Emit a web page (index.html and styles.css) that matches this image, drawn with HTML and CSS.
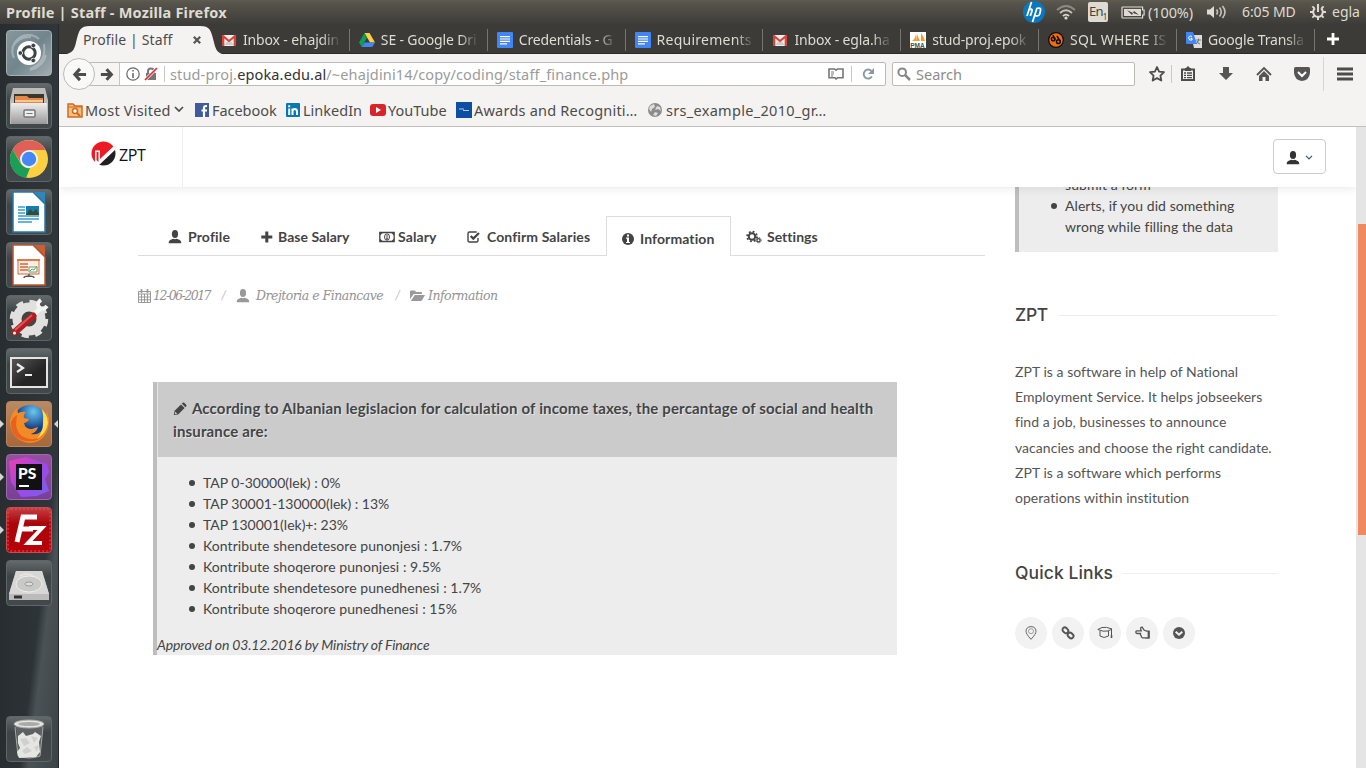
FILE: index.html
```html
<!DOCTYPE html>
<html lang="en">
<head>
<meta charset="utf-8">
<title>Profile | Staff</title>
<link rel="stylesheet" href="styles.css">
</head>
<body>
<svg class="defs" aria-hidden="true">
  <defs>
    <linearGradient id="metal" x2="0" y2="1"><stop stop-color="#eee"/><stop offset="1" stop-color="#999"/></linearGradient>
    <linearGradient id="dark" x2="1" y2="1"><stop stop-color="#555"/><stop offset=".6" stop-color="#252525"/></linearGradient>
    <linearGradient id="violet" x2="1" y2="1"><stop stop-color="#ef3fae"/><stop offset=".5" stop-color="#a346e5"/><stop offset="1" stop-color="#7562ed"/></linearGradient>
    <linearGradient id="fire" x2="1" y2="1"><stop stop-color="#ff9a2e"/><stop offset=".6" stop-color="#e65a1c"/><stop offset="1" stop-color="#ffc629"/></linearGradient>
    <radialGradient id="globe" cx=".6" cy=".2"><stop stop-color="#6ac7f2"/><stop offset="1" stop-color="#123f86"/></radialGradient>
    <symbol id="user" viewBox="0 0 14 14"><ellipse cx="7" cy="4" rx="3.1" ry="4"/><path d="M.8 13.3c-.4-3 2-3.500 4.600-4.500q1.600.8 3.200 0c2.600 1 5 1.500 4.600 4.500z"/></symbol>
    <symbol id="gmail" viewBox="0 0 16 16"><path fill="#eee" d="M1 3h14v11H1z"/><path fill="#ccc" d="m3 13 5-5 5 5z"/><path fill="#d9453b" d="M1 14V3h1.500L8 7.700 13.500 3H15v11h-2.300V6.500L8 10.300 3.300 6.500V14z"/></symbol>
    <symbol id="docs" viewBox="0 0 16 16"><rect width="16" height="16" rx="1" fill="#4285f4"/><path stroke="#fff" stroke-width="1.200" d="M3 4.600h10M3 7h10M3 9.400h10M3 11.800h7"/></symbol>
  </defs>
</svg>

<div class="panel">
  <b class="panel-title">Profile | Staff - Mozilla Firefox</b>
  <div class="tray">
    <svg class="t-hp" viewBox="0 0 22 22"><circle cx="11" cy="11" r="11" fill="#0a78bd"/><path fill="none" stroke="#fff" stroke-width="1.800" d="M8.500 1 4 15M6 9q4-2 3 1l-1.700 5M14 7l-4.500 14M13.500 7.500q5-1.300 4 2l-1 4q-.8 2-4.500 1.200"/></svg>
    <svg class="t-wifi" viewBox="0 0 20 16"><g fill="none" stroke="#8c8a83" stroke-width="1.800"><path d="M1 6q9-8 18 0"/><path stroke="#c8c4ba" d="M4 9q6-5.500 12 0"/><path stroke="#dfdbd2" d="M7 12q3-2.800 6 0"/></g><circle cx="10" cy="14" r="1.600" fill="#dfdbd2"/></svg>
    <span class="lang">En<sub>1</sub></span>
    <svg class="t-bat" viewBox="0 0 24 13"><path fill="none" stroke="#dfdbd2" stroke-width="1.200" d="M1 1.600q0-.6.600-.6h20v3h1.500v5h-1.500v3H1.600Q1 12 1 11.500z"/><path fill="#dfdbd2" d="M3 3h17v7H3z"/><path d="m6 4 6 3 1-2 5 4-6-2-1 2z" fill="#45433e"/></svg>
    <span class="pct">(100%)</span>
    <svg class="t-vol" viewBox="0 0 20 14"><path fill="#dfdbd2" d="M0 4.500h3L7 1v12L3 9.500H0z"/><path fill="none" stroke="#c8c4ba" stroke-width="1.600" d="M9.500 4.500q2 2.500 0 5M12.500 2.500q3.500 4.500 0 9M15.500 1q5 6 0 12"/></svg>
    <span class="clock">6:05 MD</span>
    <svg class="t-gear" viewBox="0 0 16 16"><path fill="none" stroke="#dfdbd2" stroke-width="2" d="M5 4.300a4.800 4.800 0 1 0 6 0"/><path stroke="#dfdbd2" stroke-width="2" d="M0 8h3m10 0h3M8 13v3M2.400 2.400l2 2m9.200-2-2 2M2.400 13.600l2-2m9.200 2-2-2M8 0v8"/></svg>
    <span class="who">egla</span>
  </div>
</div>

<div class="desktop">
<div class="launcher">
  <div class="tile t-dash"><svg viewBox="0 0 46 46"><g fill="none" stroke="#c5ced0" opacity=".55"><path stroke-width="2" d="M8 28A16 16 0 0 1 33 9M38 14q3 18-14 25M6 18Q12 6 25 7M40 25q-3 12-16 15"/></g><circle cx="23" cy="23" r="12" fill="#fff"/><circle cx="23" cy="23" r="6.200" fill="none" stroke="#3b4449" stroke-width="3"/><path stroke="#fff" stroke-width="1.300" d="M17 23h-4m13-5.200 2-3.800m-2 14.200 2 3.800"/><g fill="#3b4449" stroke="#fff" stroke-width=".7"><circle cx="14.300" cy="23" r="2.300"/><circle cx="27.300" cy="15.500" r="2.300"/><circle cx="27.300" cy="30.500" r="2.300"/></g></svg></div>
  <div class="tile"><svg viewBox="0 0 46 46"><path fill="#bcbcb8" d="M7 5h32l3 12v24H4V17z"/><path fill="#3a3630" d="M8 11h30v9H8z"/><path fill="#e58745" d="M9 13h12l2 2h14v6H9z"/><path fill="#f4c79b" d="M9 17h28v2H9z"/><rect x="5" y="20" width="36" height="21" rx="1" fill="url(#metal)"/><rect x="18" y="27" width="11" height="7" rx="1" fill="#eee" stroke="#777" stroke-width="1.500"/><path stroke="#777" d="M20.500 30.500h6"/></svg></div>
  <div class="tile"><svg viewBox="0 0 46 46"><circle cx="23" cy="23" r="19" fill="#fdd042"/><path fill="#df6058" d="M6.500 13.500A19 19 0 0 1 39.500 14H23l-8 13z"/><path fill="#1b9e58" d="M6.500 13.500 15 28q4 5 9 4l-4 10A19 19 0 0 1 6.500 13.500z"/><circle cx="23" cy="23" r="9" fill="#f2f2f2"/><circle cx="23" cy="23" r="7.200" fill="#4587f3"/></svg></div>
  <div class="tile"><svg viewBox="0 0 46 46"><path fill="#fff" stroke="#2379ad" stroke-width="1.500" d="M7 3h20l12 12v28H7z"/><path fill="#2e86ba" d="M28 3h11v11z"/><path stroke="#3b9acc" stroke-width="1.500" d="M12 18h7m-7 3h7m-7 3h7m-7 3h21m-21 3h21m-21 3h14"/><path fill="#187cb4" d="M20 17h13v9H20z"/><path fill="#384b2b" d="m20 26 4-6 3 3 3-3 3 5v1z"/></svg></div>
  <div class="tile"><svg viewBox="0 0 46 46"><path fill="#fff" stroke="#bd552b" stroke-width="1.500" d="M7 3h20l12 12v28H7z"/><path fill="#c95f34" d="M28 3h11v11z"/><rect x="12" y="18" width="21" height="14" fill="#faece4" stroke="#d36a3d"/><path stroke="#d36a3d" stroke-width="1.500" d="M11 18h23M14 22h8m-8 3h8m-8 3h8"/><path fill="#fff" stroke="#60a664" d="M23 25h8v5h-8zm1 4 2-2 2 1 3-4"/><path stroke="#555" fill="none" stroke-width="1.500" d="M23 32v3m-5 1q0-2 5-2t5 2"/></svg></div>
  <div class="tile"><svg viewBox="0 0 46 46"><circle cx="23" cy="24" r="12" fill="none" stroke="#e0e0de" stroke-width="9"/><circle cx="23" cy="24" r="17" fill="none" stroke="#e0e0de" stroke-width="4.500" stroke-dasharray="7 6.350"/><path stroke="#f4f4f2" stroke-width="5" d="m26 21 9-8"/><path fill="none" stroke="#f4f4f2" stroke-width="4" d="M35 5q-5 3-2 7 4 4 8-1"/><path stroke="#b11e22" stroke-width="7" stroke-linecap="round" d="m9 37 18-16"/><path stroke="#df555a" stroke-width="2" d="m9 35 17-15"/><circle cx="8.500" cy="38" r="1.500" fill="#fff"/></svg></div>
  <div class="tile"><svg viewBox="0 0 46 46"><rect x="4" y="9" width="38" height="31" fill="#e3e3df"/><rect x="6" y="11" width="34" height="27" fill="url(#dark)"/><path fill="none" stroke="#eee" stroke-width="2.200" d="m11 16 6 4-6 4m8 3h7"/></svg></div>
  <div class="tile t-ff"><i class="run"></i><i class="run active"></i><svg viewBox="0 0 46 46"><circle cx="24" cy="21" r="17" fill="url(#globe)"/><path fill="#f28a25" d="M4 19q2-8 7-12l1 5q5-2 8-1-3 3-2 6l5 1q-1 3-5 4 1 6 8 6l6-2q-1 5-7 7 10 2 14-9 3-9 1-15 5 8 2 18-4 14-18 15Q4 40 4 19z"/><path fill="#e8611e" d="M5 22q0 15 14 18 13 2 19-7-5 6-14 5Q11 36 10 23l1-9q-5 3-6 8z"/><path fill="#ffdb4d" d="M36 8q8 9 5 18-3 8-10 12 6-8 6-15 1-8-1-15z"/></svg></div>
  <div class="tile t-ps"><i class="run"></i><svg viewBox="0 0 46 46"><path fill="url(#violet)" d="m3 7 17-4 21 7 2 8-4 7 4 12-12 5-16 1-10-15z"/><rect x="10" y="10" width="26" height="26" fill="#111"/><path stroke="#fff" stroke-width="2" d="M13 32h10"/><text x="12" y="25" fill="#fff" font-family="Lato" font-weight="900" font-size="15.500">PS</text></svg></div>
  <div class="tile t-fz"><i class="run"></i><svg viewBox="0 0 46 46"><rect x="2" y="2" width="42" height="42" rx="3" fill="none" stroke="#df5660" stroke-dasharray="2 2"/><path fill="none" stroke="#fff" stroke-width="5" d="M31 10H17l-6 25m4-13h12"/><path fill="none" stroke="#fff" stroke-width="4" d="M23 21h13L22 36h14"/></svg></div>
  <div class="tile"><svg viewBox="0 0 46 46"><path fill="#bbb" d="M10 11h26l7 23v6H3v-6z"/><path fill="#d7d7d5" d="M10 11h26l7 23H3z"/><ellipse cx="23" cy="24" rx="13" ry="8" fill="#c9c9c7" stroke="#eee"/><ellipse cx="23" cy="24" rx="4" ry="2" fill="#ddd" stroke="#999"/><path stroke="#333" stroke-width="3" d="M8 37h8"/><path fill="none" stroke="#eee" d="M14 16q8-5 14 1"/></svg></div>
  <div class="tile trash"><svg viewBox="0 0 46 46"><path fill="#777c7d" opacity=".5" d="m10 10 2 31h22l3-31z"/><ellipse cx="23" cy="8" rx="15" ry="4" fill="#e5e5e0" stroke="#aaa"/><ellipse cx="23" cy="8" rx="11" ry="2" fill="#aaa"/><path fill="none" stroke="#aaa" d="m9 11 3 29q11 4 22 0l3-29"/><path fill="#e5e5e2" d="m12 20 5-4 3 4 7-2 2-2 6 4-2 6 1 10-4 5-17 1-2-6 3-4-2-5z"/><path fill="#d0d1ce" d="m14 23 6-1 4 5-6 3zm11-3 7 2-4 5zm-9 15 5-4 5 4-7 3zm12-4 5-2-2 7z"/></svg></div>
</div>

<div class="browser">
  <div class="tabstrip">
    <div class="tab-active">
      <svg class="tab-shape" viewBox="0 0 166 30" preserveAspectRatio="none"><path fill="#f4f3f1" d="M0 30V29.500C11 29.500 13 26 15 18 18 6 19 2 29 2H139C149 2 150 6 153 18 155 26 157 29.500 166 29.500V30z"/></svg>
      <span class="tab-name">Profile | Staff</span>
      <svg class="tab-close" viewBox="0 0 8 8"><path stroke="#555" stroke-width="2.200" d="m.8.8 6.400 6.400m0-6.400L.8 7.200"/></svg>
    </div>
    <div class="tab"><svg viewBox="0 0 16 16"><use href="#gmail"/></svg><span>Inbox - ehajdin</span></div>
    <div class="tab"><svg viewBox="0 0 16 16"><path fill="#ffcf45" d="M5.500 1h5L16 10.500h-5z"/><path fill="#0f9d58" d="M5.500 1 8 5.500 2.700 15 0 10.500z"/><path fill="#4285f4" d="M5.500 10.500H16L13.300 15H2.700z"/></svg><span>SE - Google Dri</span></div>
    <div class="tab"><svg viewBox="0 0 16 16"><use href="#docs"/></svg><span>Credentials - G</span></div>
    <div class="tab"><svg viewBox="0 0 16 16"><use href="#docs"/></svg><span class="wide">Requirements</span></div>
    <div class="tab"><svg viewBox="0 0 16 16"><use href="#gmail"/></svg><span>Inbox - egla.ha</span></div>
    <div class="tab"><svg viewBox="0 0 16 16"><path fill="#fff" d="M0 0h16v16H0z"/><path fill="#f59b26" d="M2 9q4-3 4-8l1 8zm5 0V2l3 7zm4 0V1q3 4 4 8z"/><text x=".2" y="15.500" font-family="Liberation Sans" font-weight="bold" font-size="6.500" fill="#335566">PMA</text></svg><span>stud-proj.epok</span></div>
    <div class="tab"><svg viewBox="0 0 16 16"><circle cx="8" cy="8" r="8" fill="#111"/><circle cx="8" cy="8" r="6.700" fill="#f36c13"/><g fill="none" stroke="#111" stroke-width="1.500"><circle cx="5.200" cy="7" r="1.800"/><circle cx="10.400" cy="9.700" r="1.900"/><path d="m5 3 2 5m2-4 3 5"/></g></svg><span class="wide">SQL WHERE IS</span></div>
    <div class="tab"><svg viewBox="0 0 16 16"><path fill="#ddd" d="M5 3h11v13H8z"/><path fill="#4385f5" d="M0 0h7l4 12H1q-1 0-1-1z"/><path fill="none" stroke="#fff" d="M6 4.500q-3-1.500-3.300 1.500Q3 9 6 8V6.300H4.500"/><path fill="none" stroke="#6c7b84" d="M10 8h5m-2.500-1.500V8q0 3-2.500 4m1-3q1 3 3 3"/></svg><span>Google Transla</span></div>
    <svg class="newtab" viewBox="0 0 12 12"><path stroke="#fff" stroke-width="2.800" d="M6 0v12M0 6h12"/></svg>
  </div>

  <div class="navbar">
    <div class="back"><svg viewBox="0 0 16 16"><path fill="none" stroke="#4c4c4c" stroke-width="3.200" d="M8.500 2 3 8l5.500 6M3 8h12"/></svg></div>
    <div class="urlbar">
      <div class="fwd"><svg viewBox="0 0 16 16"><path fill="none" stroke="#4c4c4c" stroke-width="3.500" d="M7.500 2 13 8l-5.500 6M13 8H1"/></svg></div>
      <svg class="u-info" viewBox="0 0 14 14"><circle cx="7" cy="7" r="6.200" fill="none" stroke="#666" stroke-width="1.200"/><path stroke="#666" stroke-width="1.500" d="M7 6v5M7 3v1.600"/></svg>
      <svg class="u-lock" viewBox="0 0 14 14"><path fill="none" stroke="#777" stroke-width="2" d="M4 7V4q0-2.500 3-2.500T10 4v3"/><path fill="#777" d="M2 6h10v7H2z"/><path stroke="#fff" stroke-width="3" d="M1 13 13 1"/><path stroke="#dc2e32" stroke-width="1.700" d="M1 13 13 1"/></svg>
      <i class="u-sep"></i>
      <span class="url">stud-proj.<em>epoka.edu.al</em>/~ehajdini14/copy/coding/staff_finance.php</span>
      <svg class="u-reader" viewBox="0 0 16 12"><path fill="none" stroke="#777" stroke-width="1.600" d="M7 9.800H1V1h5.500L8 2.200 9.500 1H15v8.800H9.500L8 11z"/><path stroke="#777" d="M3 4h3M3 6h3M3 8h2"/></svg>
      <i class="u-sep u-sep2"></i>
      <svg class="u-reload" viewBox="0 0 12 12"><path fill="none" stroke="#8899a5" stroke-width="1.900" d="M9.500 3A4.500 4.500 0 1 0 10 8.500"/><path fill="#8899a5" d="M12 0v6H6z"/></svg>
    </div>
    <div class="search"><svg viewBox="0 0 14 14"><circle cx="5.200" cy="5.200" r="3.800" fill="none" stroke="#888" stroke-width="2"/><path stroke="#888" stroke-width="2.500" d="m8 8 5 5"/></svg><span>Search</span></div>
    <div class="tools">
      <svg class="star" viewBox="0 0 16 16"><path fill="none" stroke="#4c4c4c" stroke-width="1.800" stroke-linejoin="round" d="m8 1 2.100 4.600 4.900.6-3.600 3.400.9 4.900L8 12.100l-4.300 2.400.9-4.900L1 6.200l4.900-.6z"/></svg>
      <i class="g-sep"></i>
      <svg class="clip" viewBox="0 0 16 16"><path fill="none" stroke="#4c4c4c" stroke-width="2" d="M2 3.500h12V14H2z"/><path fill="#4c4c4c" d="M5 2h1l2-2 2 2h1v3H5z"/><path stroke="#4c4c4c" stroke-width="1.300" d="M4 7h2m1 0h5M4 9.300h2m1 0h5M4 11.600h2m1 0h5"/></svg>
      <svg class="down" viewBox="0 0 16 16"><path fill="#555" d="M5 1h6v6h4l-7 7-7-7h4z"/></svg>
      <svg class="home" viewBox="0 0 16 16"><path fill="none" stroke="#555" stroke-width="1.900" d="m1 9 7-7 7 7"/><path fill="#555" d="m3 10 5-5 5 5v5H9.500v-4h-3v4H3z"/></svg>
      <svg class="pocket" viewBox="0 0 16 14"><path fill="#555" d="M1.500 0h13Q16 0 16 1.500V6q-1 7.500-8 8Q1 13.500 0 6V1.500Q0 0 1.500 0z"/><path fill="none" stroke="#fff" stroke-width="2" d="m4 5 4 4 4-4"/></svg>
      <i class="g-sep tall"></i>
      <svg class="menu" viewBox="0 0 16 14"><path stroke="#4c4c4c" stroke-width="2.800" d="M0 2h16M0 7h16M0 12h16"/></svg>
    </div>
  </div>

  <div class="bookmarks">
    <div class="bm bm1"><svg viewBox="0 0 16 16"><path fill="#f5c07d" stroke="#cf6b20" stroke-width="1.500" d="M1 2h5l2 2h7v11H1z"/><path stroke="#cf6b20" d="M1 5h14"/><circle cx="8" cy="9" r="2.500" fill="#fff" stroke="#cf6b20" stroke-width="1.500"/><path stroke="#cf6b20" stroke-width="2" d="m10 11 3 3"/></svg><span>Most Visited</span><svg class="chev" viewBox="0 0 10 7"><path fill="none" stroke="#4c4c4c" stroke-width="1.700" d="m1 1 4 4 4-4"/></svg></div>
    <div class="bm bm2"><svg viewBox="0 0 16 16"><path fill="#3f5b9b" d="M1 1h14v14H1z"/><path fill="none" stroke="#fff" stroke-width="2.200" d="M13 4h-1q-2 0-2 2v9M7.500 8.500H13"/></svg><span>Facebook</span></div>
    <div class="bm bm3"><svg viewBox="0 0 16 16"><rect x="1" y="1" width="14" height="14" rx="1" fill="#0878b5"/><path fill="none" stroke="#fff" stroke-width="2" d="M4.200 6.500V13M4.200 3.300v2M7.500 6.500V13m0-3.500q0-2.500 2.300-2.500Q12 7 12 9.500V13"/></svg><span>LinkedIn</span></div>
    <div class="bm bm4"><svg viewBox="0 0 16 16"><rect y="2" width="16" height="12" rx="3" fill="#d9252a"/><path fill="#fff" d="m6 5 5 3-5 3z"/></svg><span>YouTube</span></div>
    <div class="bm bm5"><svg viewBox="0 0 16 16"><path fill="#0b4ea2" d="M0 0h16v16H0z"/><path stroke="#b7cbe5" d="M3 7h5m-1 1.500h6"/></svg><span>Awards and Recogniti…</span></div>
    <div class="bm bm6"><svg viewBox="0 0 16 16"><circle cx="8" cy="8" r="7" fill="#8b8b8b"/><path fill="#ddd" d="m3 4 4-2 1 3-3 2-1 3-2-3zm7 0 3 1 1 4-3-2-3 1zM8 10l3 1-2 3-3-1z"/></svg><span>srs_example_2010_gr…</span></div>
  </div>

  <div class="page">
    <div class="page-col">
      <header class="site-head">
        <div class="logo"><svg viewBox="0 0 26 26"><defs><clipPath id="disc"><circle cx="12.500" cy="12.500" r="12"/></clipPath></defs><g clip-path="url(#disc)"><path fill="#ed1c24" d="M0 0h26v2L9 18V9.500H4V26H0z"/><path fill="#ed1c24" d="M5.500 11h2v10l-2-2z"/><path fill="#231f20" d="M26 7v19H6z"/></g></svg><span>ZPT</span></div>
        <div class="account"><svg class="a-user" viewBox="0 0 14 14"><use href="#user"/></svg><svg class="a-chev" viewBox="0 0 8 5"><path fill="none" stroke="#355b78" stroke-width="1.200" d="m1 .8 3 3 3-3"/></svg></div>
      </header>
      <div class="columns">
        <main>
          <nav class="menu-tabs">
            <a class="m1"><svg viewBox="0 0 14 14"><use href="#user"/></svg>Profile</a>
            <a class="m2"><svg viewBox="0 0 14 14"><path d="M5.300 1.500h3v4h4v3h-4v4h-3v-4h-4v-3h4z"/></svg>Base Salary</a>
            <a class="m3"><svg viewBox="0 0 16 14"><path fill="none" stroke="#444" stroke-width="1.300" d="M.8 2.500h14.400v9H.8z"/><path d="M1 3h2.500L1 5.500zm14 0h-2.500L15 5.500zM1 11h2.500L1 8.500zm14 0h-2.500L15 8.500z"/><ellipse cx="8" cy="7" rx="2.500" ry="3.200" fill="none" stroke="#444"/><path stroke="#444" d="M8 5v4M7 9h2"/></svg>Salary</a>
            <a class="m4"><svg viewBox="0 0 14 14"><path fill="none" stroke="#444" stroke-width="1.400" d="M11 8v2.500q0 1.500-1.500 1.500h-7Q1 12 1 10.500v-7Q1 2 2.500 2h7.200"/><path fill="none" stroke="#444" stroke-width="2.200" d="m3.700 6 2.600 2.600L12 3"/></svg>Confirm Salaries</a>
            <a class="m5"><svg viewBox="0 0 14 14"><circle cx="7" cy="7" r="6"/><path fill="#fff" d="M6 2.500h2v2H6zM5 5.500h3V10h1v1H5v-1h1V6.700H5z"/></svg>Information</a>
            <a class="m6"><svg viewBox="0 0 16 14"><circle cx="6" cy="6.500" r="3.200" fill="none" stroke="#444" stroke-width="2"/><circle cx="6" cy="6.500" r="4.900" fill="none" stroke="#444" stroke-width="1.800" stroke-dasharray="1.900 1.950"/><circle cx="12.500" cy="10.200" r="1.600" fill="none" stroke="#444" stroke-width="1.300"/><circle cx="12.500" cy="10.200" r="2.700" fill="none" stroke="#444" stroke-width="1" stroke-dasharray="1.100 1.020"/></svg>Settings</a>
          </nav>
          <div class="meta">
            <svg class="i-cal" viewBox="0 0 13 14"><path fill="none" stroke="#999" d="M.5 2.500h12v11H.5zM.5 5h12M.5 8h12M.5 10.800h12M3.500 5v8.500M6.500 5v8.500M9.500 5v8.500"/><path stroke="#999" stroke-width="1.700" d="M3.500 0v4m6-4v4"/></svg>
            <span class="date">12-06-2017</span><span class="slash">/</span>
            <svg class="i-usr" viewBox="0 0 14 14"><use href="#user"/></svg>
            <span class="dept">Drejtoria e Financave</span><span class="slash">/</span>
            <svg class="i-fold" viewBox="0 0 15 12"><path d="M0 1.500Q0 .5 1 .5h4l1 1.500h5q1 0 1 1v1H4.500q-1 0-1.500 1L0 9.200z"/><path d="M4.800 5H15l-2.800 5q-.6 1-1.700 1H.8z"/></svg>
            <span class="topic">Information</span>
          </div>
          <section class="notice">
            <h3><svg viewBox="0 0 14 14"><path d="m.8 13 .8-4.200L8 2.400l3.600 3.600-6.500 6.500z"/><path d="m8.800 1.600.9-.9q.8-.6 1.500.1l2 2q.7.700.1 1.500l-.9.900z"/><path fill="#cbcbcb" d="m2.200 9.700 2.100 2.100-1.700.4-.8-.8z"/></svg>According to Albanian legislacion for calculation of income taxes, the percantage of social and health<br>insurance are:</h3>
            <ul>
              <li>TAP 0-30000(lek) : 0%</li>
              <li>TAP 30001-130000(lek) : 13%</li>
              <li>TAP 130001(lek)+: 23%</li>
              <li class="k">Kontribute shendetesore punonjesi : 1.7%</li>
              <li class="k">Kontribute shoqerore punonjesi : 9.5%</li>
              <li class="k">Kontribute shendetesore punedhenesi : 1.7%</li>
              <li class="k">Kontribute shoqerore punedhenesi : 15%</li>
            </ul>
            <p>Approved on 03.12.2016 by Ministry of Finance</p>
          </section>
        </main>
        <aside>
          <ul class="hints">
            <li class="plain">submit a form</li>
            <li>Alerts, if you did something<br>wrong while filling the data</li>
          </ul>
          <h4 class="h-zpt"><span>ZPT</span></h4>
          <p class="about">ZPT is a software in help of National<br>Employment Service. It helps jobseekers<br>find a job, businesses to announce<br>vacancies and choose the right candidate.<br>ZPT is a software which performs<br>operations within institution</p>
          <h4 class="h-quick"><span>Quick Links</span></h4>
          <div class="quick">
            <i><svg viewBox="0 0 14 14"><path fill="none" stroke="#666" d="M7 13.300Q2 8 2 5.200 2.300.7 7 .6q4.700.1 5 4.600Q12 8 7 13.300z"/><circle cx="7" cy="5.200" r="2.500" fill="none" stroke="#888" stroke-width=".8"/></svg></i>
            <i><svg viewBox="0 0 14 14"><g fill="none" stroke="#555" stroke-width="1.900"><rect x="1.300" y="2" width="6.200" height="4.600" rx="2.200" transform="rotate(45 4.400 4.300)"/><rect x="6.500" y="7.200" width="6.200" height="4.600" rx="2.200" transform="rotate(45 9.600 9.500)"/></g></svg></i>
            <i><svg class="cap" viewBox="0 0 16 14"><path fill="none" stroke="#555" d="M.8 3.500 5 1.500q4-1 10 1.500L11 5Q6 6 .8 3.500zM3 5v5q4 3 8.500 0V5M14.500 3v6"/><path fill="#555" d="M13.700 9h1.600v3h-1.600z"/></svg></i>
            <i><svg class="hand" viewBox="0 0 15 14"><path fill="none" stroke="#555" stroke-width="1.300" d="M11 11.800H7.800Q6 11.500 6.300 10 5 9 5.500 7.500H2Q.8 7.300.8 6 .8 5 2 4.800h4.300L5.600 3Q5.600 1 7.200 1.200L9 4l2.500 1.200H14V12h-3z"/><path fill="#555" d="M12.600 5h2v7h-2z"/></svg></i>
            <i><svg viewBox="0 0 14 14"><circle cx="7" cy="7" r="6" fill="#555"/><path fill="none" stroke="#f2f2f2" stroke-width="2" d="m3.700 5.700 3.300 3 3.300-3"/></svg></i>
          </div>
        </aside>
      </div>
    </div>
    <div class="scroll"><div class="thumb"></div></div>
  </div>
</div>
</div>
</body>
</html>
```
FILE: styles.css
```css
* { box-sizing: border-box; }
body { margin: 0; width: 1366px; height: 768px; overflow: hidden; display: flex; flex-direction: column; font-family: "Noto Sans", "Open Sans", sans-serif; background: #fff; }
svg { flex: none; display: block; }
.defs { position: absolute; width: 0; height: 0; }
i { font-style: normal; }

/* top panel */
.panel { height: 24px; flex: none; display: flex; align-items: center; justify-content: space-between; background: linear-gradient(#5f5c51, #57554c 10%, #3e3c38); color: #dfdbd2; font-size: 14px; line-height: 24px; white-space: nowrap; }
.panel-title { padding-left: 6px; font-size: 14.500px; letter-spacing: 0.2px; }
.tray { width: 343px; display: flex; align-items: center; }
.t-hp { width: 22px; height: 22px; }
.t-wifi { width: 20px; height: 16px; margin-left: 11px; }
.lang { width: 20px; height: 20px; margin-left: 12px; border-radius: 2px; background: #dfdbd2; color: #45433e; font-size: 13px; line-height: 19px; padding-left: 1px; letter-spacing: -0.8px; }
.lang sub { font-size: 8px; line-height: 0; }
.t-bat { width: 24px; height: 13px; margin-left: 13px; }
.pct { width: 47px; margin-left: 3px; font-size: 14.500px; letter-spacing: -0.1px; }
.t-vol { width: 20px; height: 14px; margin-left: 12px; }
.clock { width: 56px; margin-left: 15px; letter-spacing: -0.1px; }
.t-gear { width: 16px; height: 16px; margin-left: 12px; }
.who { margin-left: 6px; letter-spacing: 0; }

.desktop { flex: 1; display: flex; min-height: 0; }

/* launcher */
.launcher { width: 59px; flex: none; padding: 6px 0 6px 6px; display: flex; flex-direction: column; gap: 7px; border-right: 1px solid #24282a; background: linear-gradient(97deg, transparent 66%, #4b5256 74%, #3c4347 100%) 0 300px / 100% 444px no-repeat, linear-gradient(90deg, #282d30, #30373a); }
.tile { position: relative; width: 46px; height: 46px; flex: none; border-radius: 4px; border: 1px solid #5f6568; background: linear-gradient(#64696b, #3f4447 35%, #43484a); }
.tile svg { width: 46px; height: 46px; margin: -1px; }
.t-dash { background: linear-gradient(135deg, #87979c, #71858d 50%, #a2aeb2); border-color: #a6b0b3; }
.t-ff { background: linear-gradient(#b88a65, #a7673b); border-color: #b9855e; }
.t-ps { background: linear-gradient(#93509f, #793f98); border-color: #a467ad; }
.t-fz { background: linear-gradient(#c63d42, #a9060c 35%, #b80007); border-color: #c74d4f; }
.trash { margin-top: auto; }
.run { position: absolute; left: -7px; top: 18px; border: 4px solid transparent; border-left-color: #d5d5d5; border-right: 0; }
.run.active { left: auto; right: -7px; border-right: 4px solid #d5d5d5; border-left: 0; }

/* browser */
.browser { flex: 1; min-width: 0; display: flex; flex-direction: column; background: #f4f3f1; color: #4c4c4c; }
.tabstrip { height: 30px; flex: none; display: flex; align-items: center; background: #3c3b37; border-bottom: 1px solid #2b2a27; font-size: 14px; white-space: nowrap; }
.tab-active { position: relative; width: 153px; height: 30px; flex: none; display: flex; align-items: center; padding: 2px 0 0 24px; }
.tab-shape { position: absolute; left: 2px; top: 0; width: 166px; height: 31px; }
.tab-name { position: relative; width: 110px; color: #4c4c4c; letter-spacing: 0.13px; }
.tab-close { position: relative; width: 8px; height: 8px; }
.tab { width: 137.850px; height: 22px; margin-top: 2px; padding-left: 9px; flex: none; display: flex; align-items: center; gap: 6px; border-right: 1px solid #77756f; color: #dfdbd2; position: relative; }
.tab svg { width: 16px; height: 16px; }
.tab span { width: 98px; letter-spacing: -0.15px; -webkit-mask-image: linear-gradient(90deg, #000 80%, transparent); mask-image: linear-gradient(90deg, #000 80%, transparent); }
.tab span.wide { letter-spacing: 0.25px; }
.newtab { width: 12px; height: 12px; margin-left: 12px; }

.navbar { height: 40px; flex: none; display: flex; align-items: center; padding-left: 4px; }
.back { position: relative; z-index: 1; width: 32px; height: 32px; flex: none; border: 1px solid #bdbab6; border-radius: 50%; background: #f9f9f8; display: flex; align-items: center; justify-content: center; }
.back svg, .fwd svg { width: 15px; height: 15px; }
.urlbar { width: 801px; height: 24px; margin-left: -10px; flex: none; display: flex; align-items: center; background: #fff; border: 1px solid #bebbb7; border-radius: 2px; }
.fwd { width: 34px; height: 22px; flex: none; padding-left: 14px; background: #f6f5f4; border-right: 1px solid #c9c6c2; display: flex; align-items: center; }
.fwd svg { width: 14px; }
.u-info { width: 14px; height: 14px; margin-left: 6px; }
.u-lock { width: 14px; height: 14px; margin-left: 4px; }
.u-sep { width: 1px; height: 16px; flex: none; margin-left: 6px; background: #c9c6c2; }
.url { width: 658px; margin-left: 5px; font-size: 14.500px; letter-spacing: 0.14px; color: #9b9b9b; white-space: nowrap; }
.url em { font-style: normal; color: #333; }
.u-reader { width: 16px; height: 12px; }
.u-sep2 { margin-left: 7px; }
.u-reload { width: 12px; height: 12px; margin-left: 10px; }
.search { width: 243px; height: 24px; flex: none; margin-left: 6px; padding-left: 4px; display: flex; align-items: center; gap: 5px; border: 1px solid #bebbb7; border-radius: 2px; background: #fff; color: #8c8c8c; font-size: 14.500px; }
.search svg { width: 14px; height: 14px; }
.tools { display: flex; align-items: center; padding-left: 14px; }
.tools svg { width: 16px; height: 16px; }
.g-sep { width: 1px; height: 18px; margin: 0 8px 0 6px; background: #cbc9c5; }
.g-sep.tall { height: 34px; margin: 0 13px; background: #d8d6d3; }
.down, .home, .pocket { margin-left: 22px; }
.tools .pocket, .tools .menu { height: 14px; }

.bookmarks { height: 33px; flex: none; padding: 0 0 1px 8px; border-bottom: 1px solid #c3bfbb; display: flex; align-items: center; font-size: 14.500px; white-space: nowrap; }
.bm { display: flex; align-items: center; gap: 2px; flex: none; }
.bm svg { width: 16px; height: 16px; }
.bm svg.chev { width: 10px; height: 7px; }
.bm1 { width: 127px; letter-spacing: 0.2px; } .bm2 { width: 91px; } .bm3 { width: 85px; } .bm4 { width: 86px; } .bm5 { width: 191px; letter-spacing: 0.22px; }
.bm1 span { width: 87px; }
.bm2 { letter-spacing: -0.05px; }
.bm6 { gap: 3px; letter-spacing: 0.3px; }

/* page */
.page { flex: 1; min-height: 0; display: flex; background: #fff; font-family: Lato, sans-serif; color: #444; }
.page-col { width: 1297px; flex: none; display: flex; flex-direction: column; }
.scroll { width: 10px; flex: none; background: #e5e5e5; padding: 97px 0 0 2px; }
.thumb { height: 311px; background: #f0895f; }
.site-head { position: relative; z-index: 2; height: 60px; flex: none; display: flex; justify-content: space-between; background: #fff; box-shadow: 0 1px 9px rgba(0,0,0,.1); clip-path: inset(0 0 -14px 0); }
.logo { width: 124px; height: 60px; border-right: 1px solid #eee; padding: 14px 0 0 32px; display: flex; gap: 2px; font: 16px/28px "Open Sans", sans-serif; color: #111; letter-spacing: -0.4px; }
.logo svg { width: 26px; height: 26px; }
.account { width: 53px; height: 35px; margin: 12px 30px 0 0; border: 1px solid #ccc; border-radius: 4px; display: flex; align-items: center; gap: 5px; padding: 2px 0 0 12px; fill: #333; }
.a-user { width: 14px; height: 14px; }
.a-chev { width: 8px; height: 5px; }
.columns { display: flex; padding-left: 79px; }
main { width: 847px; margin-right: 30px; padding-top: 29px; }
.menu-tabs { height: 40px; border-bottom: 1px solid #ddd; padding-left: 30px; display: flex; font-weight: 700; font-size: 14px; line-height: 42px; white-space: nowrap; }
.menu-tabs a { display: flex; align-items: center; height: 42px; gap: 6px; flex: none; }
.menu-tabs svg { width: 14px; height: 14px; fill: #444; }
.menu-tabs .m1 { width: 92px; letter-spacing: 0.15px; }
.menu-tabs .m2 { width: 119px; gap: 4px; letter-spacing: 0.03px; }
.menu-tabs .m3 { width: 88px; gap: 3px; letter-spacing: 0.1px; }
.menu-tabs .m3 svg, .menu-tabs .m6 svg { width: 16px; }
.menu-tabs .m4 { width: 139px; gap: 6px; letter-spacing: 0.1px; }
.menu-tabs .m5 { width: 125px; height: 40px; padding: 5px 0 0 14px; gap: 5px; border: 1px solid #ddd; border-bottom: 0; background: #fff; letter-spacing: 0.1px; }
.menu-tabs .m6 { padding-left: 15px; gap: 5px; letter-spacing: 0.02px; }
.meta { height: 20px; margin-top: 30px; display: flex; align-items: center; font: italic 12.500px/20px "DejaVu Serif", serif; color: #939393; fill: #999; white-space: nowrap; }
.i-cal { width: 13px; height: 14px; }
.date { width: 68px; margin-left: 2px; letter-spacing: -1.5px; }
.slash { width: 15px; color: #bbb; font-style: italic; font-family: Lato, sans-serif; }
.i-usr { width: 14px; height: 14px; }
.dept { width: 139px; margin-left: 6px; letter-spacing: -0.5px; }
.i-fold { width: 15px; height: 12px; }
.topic { margin-left: 3px; letter-spacing: -0.5px; }
.notice { width: 744px; height: 273px; margin: 76px 0 0 15px; background: #ededed; border-left: 4px solid #bebebe; }
.notice h3 { margin: 0; height: 75px; padding: 15px 15px; background: #cbcbcb; border-left: 1px solid #e4e4e4; font-size: 15px; line-height: 23px; font-weight: 700; letter-spacing: 0.155px; text-shadow: 1px 1px 1px rgba(255,255,255,.6); white-space: nowrap; }
.notice h3 svg { display: inline-block; width: 14px; height: 14px; margin-right: 5px; vertical-align: -2px; fill: #444; }
.notice ul, .hints { list-style: none; margin: 0; font-size: 14px; line-height: 21px; }
.notice ul { padding: 15px 0 0 46px; }
.notice li, .hints li { position: relative; }
.notice li.k { letter-spacing: 0.06px; }
.notice li::before, .hints li::before { content: ""; position: absolute; left: -14px; top: 8px; width: 6px; height: 6px; border-radius: 50%; background: #444; }
.notice p { margin: 15px 0 0; font-style: italic; font-size: 14px; line-height: 21px; letter-spacing: -0.15px; }
aside { width: 263px; }
.hints { margin-top: -14px; height: 79px; padding: 1px 0 0 46px; background: #ededed; border-left: 4px solid #bebebe; white-space: nowrap; letter-spacing: 0.07px; }
.hints li.plain::before { display: none; }
h4 { margin: 0; height: 26px; display: flex; align-items: center; gap: 10px; font: 500 17.500px/26px Inter, sans-serif; letter-spacing: -0.1px; color: #444; white-space: nowrap; }
h4::after { content: ""; flex: 1; height: 1px; background: #eee; }
.h-zpt { margin-top: 50px; letter-spacing: -0.3px; }
.h-quick { letter-spacing: 0.1px; }
.about { margin: 31px 0 0; font-size: 14px; line-height: 25.200px; color: #555; white-space: nowrap; letter-spacing: 0.04px; }
.h-quick { margin-top: 50px; }
.quick { margin-top: 31px; display: flex; gap: 5px; }
.quick i { width: 32px; height: 32px; border-radius: 50%; background: #f2f2f2; display: flex; align-items: center; justify-content: center; }
.quick svg { width: 14px; height: 14px; }
.quick svg.cap { width: 16px; }
.quick svg.hand { width: 15px; }
```
